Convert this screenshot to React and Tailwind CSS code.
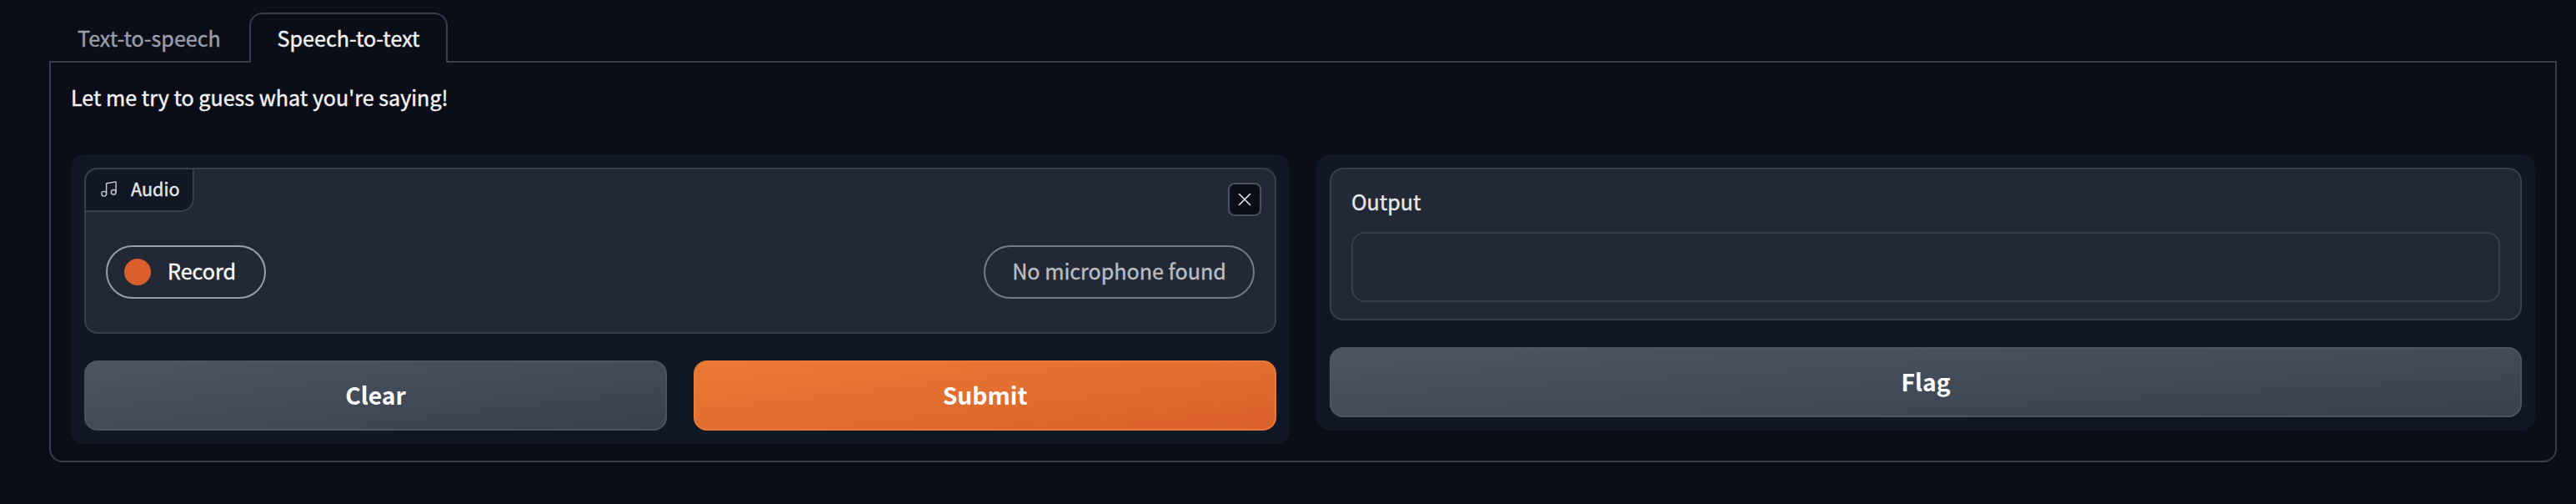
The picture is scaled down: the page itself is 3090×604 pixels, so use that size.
const button =
  "flex h-[84px] flex-1 items-center justify-center rounded-2xl border-2 pb-[2px] text-[28.3px] font-bold leading-none text-white [-webkit-text-stroke:0px]";
const grayButton = " border-[#4d5562] bg-linear-to-br from-[#4d5562] to-[#394150]";
const orangeButton = " border-[#ea7a35] bg-linear-to-br from-[#ea7a35] to-[#d9602a]";

function Tab({ active, children }) {
  return (
    <button
      className={
        active
          ? "relative -mb-[2px] flex h-[60px] w-[238px] items-center justify-center rounded-t-2xl border-2 border-b-0 border-[#393f4e] bg-[#0b0e17] text-[#f3f4f6]"
          : "flex h-[60px] w-[240px] items-center pl-[34px] pt-[1px] text-[#9b9fab]"
      }
    >
      <span className="whitespace-nowrap">{children}</span>
    </button>
  );
}

function AudioBlock() {
  return (
    <div className="relative h-[199px] rounded-2xl border-2 border-[#393f4c] bg-[#222835]">
      <div className="absolute -left-[2px] -top-[2px] flex h-[53px] w-[132px] items-center rounded-br-2xl rounded-tl-2xl border-2 border-[#393f4c] bg-[#121725] pb-[3px] pl-[16px] text-[#e5e7eb]">
        <svg className="size-[23px] text-[#c6c8cd]" viewBox="0 0 24 24" fill="none" stroke="currentColor" strokeWidth="1.5" strokeLinecap="round" strokeLinejoin="round">
          <path d="M9 18V5l12-2v13" />
          <circle cx="6" cy="18" r="3" />
          <circle cx="18" cy="16" r="3" />
        </svg>
        <span className="ml-[15px] text-[21.6px] leading-none">Audio</span>
      </div>
      <button className="absolute right-[16px] top-[16px] flex size-[40px] items-center justify-center rounded-lg border-2 border-[#4b515d] bg-[#0b0e17]">
        <svg className="size-[20px]" viewBox="0 0 20 20" fill="none" stroke="#e5e7eb" strokeWidth="1.6" strokeLinecap="round">
          <path d="M3.5 3.5L16.5 16.5M16.5 3.5L3.5 16.5" />
        </svg>
      </button>
      <div className="flex items-center justify-between px-[24px] pt-[91px]">
        <button className="flex h-[64px] w-[192px] items-center rounded-full border-2 border-[#9b9fab] pl-[20px] text-white">
          <span className="size-[32px] rounded-full bg-[#d9602a]" />
          <span className="ml-[20px] pb-[2px]">Record</span>
        </button>
        <div className="flex h-[64px] w-[325px] items-center justify-center rounded-full border-2 border-[#767b87] pb-[2px] text-[#bbbdc0]">
          <span>No microphone found</span>
        </div>
      </div>
    </div>
  );
}

export default function App() {
  return (
    <div className="h-[604px] w-[3090px] overflow-hidden bg-[#0b0e17] pl-[59px] pt-[15px] font-['Noto_Sans_CJK_SC',sans-serif] text-[25.1px] leading-none [-webkit-text-stroke:0.4px]">
      <div className="flex h-[58px]">
        <Tab>Text-to-speech</Tab>
        <Tab active>Speech-to-text</Tab>
      </div>
      <div className="h-[481px] w-[3008px] rounded-b-2xl border-2 border-[#393f4e] px-[24px] pt-[24px]">
        <p className="flex h-[36px] items-center pb-[1px] text-[#f3f4f6]">Let me try to guess what you're saying!</p>
        <div className="mt-[50px] flex items-start gap-8">
          <div className="flex w-[1462px] flex-col gap-8 rounded-2xl bg-[#121725] p-4">
            <AudioBlock />
            <div className="flex gap-8">
              <button className={button + grayButton}>Clear</button>
              <button className={button + orangeButton}>Submit</button>
            </div>
          </div>
          <div className="flex w-[1462px] flex-col gap-8 rounded-2xl bg-[#121725] p-4">
            <div className="h-[183px] rounded-2xl border-2 border-[#393f4c] bg-[#222835] px-[24px] pt-[21px]">
              <div className="flex h-[36px] items-center text-[#e5e7eb]">Output</div>
              <div className="mt-[18px] h-[84px] rounded-2xl border-2 border-[#393f4c]" />
            </div>
            <div className="flex">
              <button className={button + grayButton}>Flag</button>
            </div>
          </div>
        </div>
      </div>
    </div>
  );
}
